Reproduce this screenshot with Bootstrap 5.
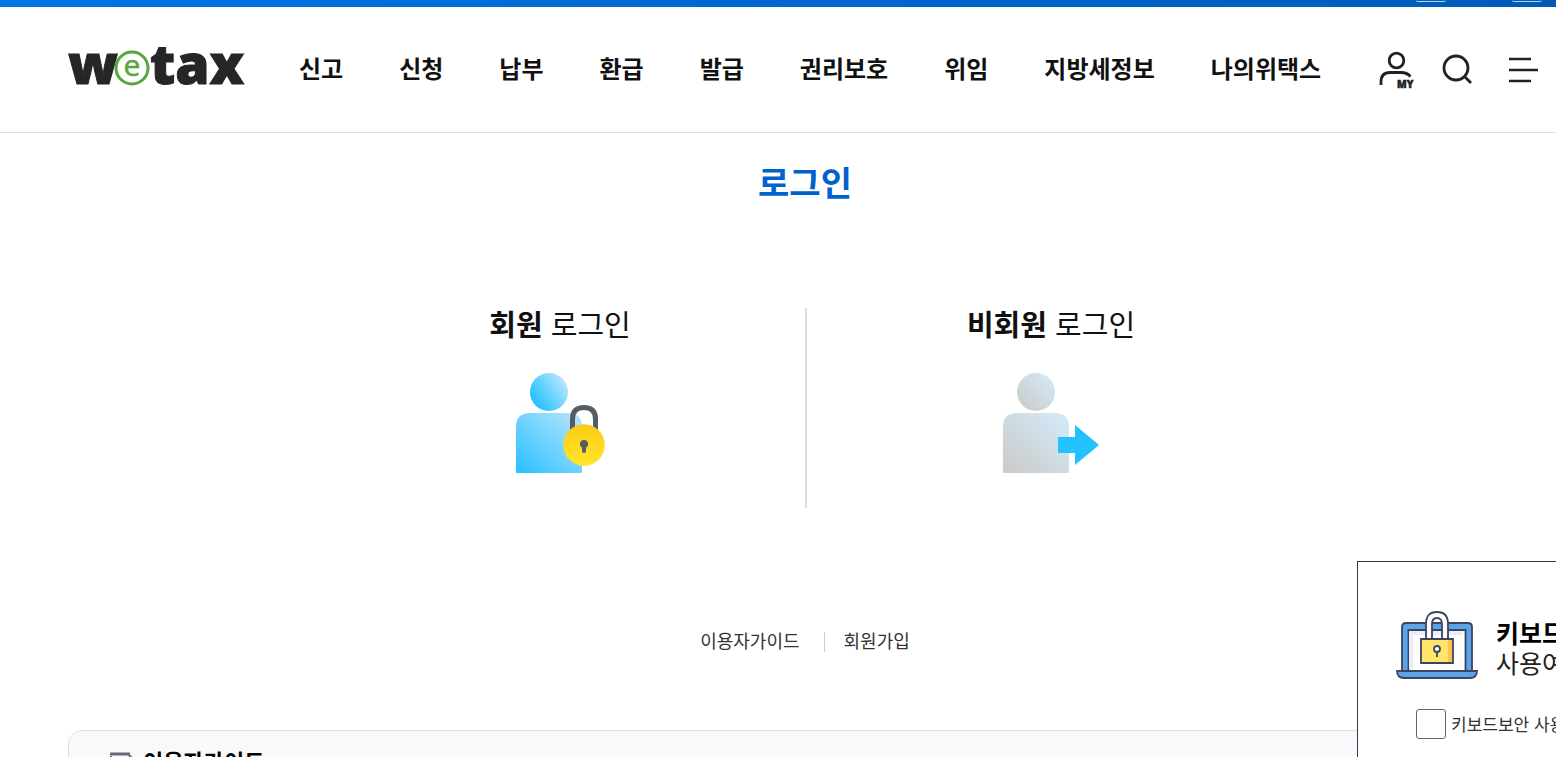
<!DOCTYPE html>
<html lang="ko">
<head>
<meta charset="utf-8">
<meta name="viewport" content="width=device-width, initial-scale=1">
<title>로그인 | wetax</title>
<link href="https://cdn.jsdelivr.net/npm/bootstrap@5.3.0/dist/css/bootstrap.min.css" rel="stylesheet">
<style>
body{font-family:"Noto Sans CJK KR",sans-serif;color:#111;background:#fff}
a{color:inherit;text-decoration:none}
.page{height:100vh}
.wrap{padding-left:68px;padding-right:14px}
.topbar{height:7px;background:linear-gradient(90deg,#0075e6,#005bb8)}
.topbar .wrap{gap:66px}
.chip{width:30px;height:2px;border-bottom:1px solid #b5d2f0;border-radius:0 0 6px 6px}
.site-head{height:126px;border-bottom:1px solid #ddd}
.logo{width:176px;height:56px}
.menu{gap:56px;margin-left:55px;padding-bottom:3px;font-size:24px;line-height:36px;font-weight:700;white-space:nowrap}
.tools{gap:20px}
.tool{height:44px}
.page-title{font-size:34px;line-height:50px;font-weight:700;color:#0062cc;padding-top:24px;margin-bottom:101px}
.choices{width:980px;max-width:100%}
.choice{height:200px}
.choice + .choice{border-left:2px solid #ddd}
.choice h2{font-size:29px;line-height:30px;margin-bottom:34px;font-weight:400}
.links{font-size:18px;line-height:20px;color:#333;margin-top:124px;margin-bottom:78px}
.links a{height:20px;line-height:16px}
.links a + a{border-left:1px solid #ccc;padding-left:19px;margin-left:24px}
.guide{height:200px;background:#f8f9fb;border:1px solid #ddd;border-radius:14px;padding:11px 40px}
.guide h3{font-size:22px;line-height:36px;font-weight:700;color:#000}
.security{right:0;top:561px;bottom:0;width:199px;border:1px solid #333a4a;border-right:0;border-bottom:0;padding:48px 0 0 38px;white-space:nowrap}
.security .headline{font-size:25px;line-height:30px;gap:18px;color:#222}
.security .words{padding-top:4px}
.security strong{color:#000}
.security .form-check-input{width:30px;height:30px;border:1px solid #666;border-radius:3px;margin:0}
.security .opt{font-size:17px;line-height:26px;margin:29px 0 0 20px;gap:5px;color:#333}
</style>
</head>
<body>
<div class="page position-relative overflow-hidden">
  <div class="topbar"><div class="wrap d-flex justify-content-end"><span class="chip"></span><span class="chip"></span></div></div>
  <header class="site-head wrap d-flex align-items-center">
    <a href="#" aria-label="wetax">
      <svg class="logo d-block overflow-visible" viewBox="0 0 176 56" fill="#262626" stroke="#262626" font-family="Open Sans, sans-serif" font-weight="800">
        <text x="0" y="42" font-size="55" stroke-width="1">w</text>
        <text x="82" y="42" font-size="55" stroke-width="1">tax</text>
        <circle cx="64" cy="26" r="16" fill="#fff" stroke="#57a83a" stroke-width="3"/>
        <text x="64" y="34" font-size="30" font-weight="400" fill="#57a83a" stroke="#57a83a" stroke-width="0.500" text-anchor="middle">e</text>
      </svg>
    </a>
    <nav class="menu d-flex" aria-label="주 메뉴">
      <a href="#">신고</a><a href="#">신청</a><a href="#">납부</a><a href="#">환급</a><a href="#">발급</a><a href="#">권리보호</a><a href="#">위임</a><a href="#">지방세정보</a><a href="#">나의위택스</a>
    </nav>
    <div class="tools d-flex ms-auto">
      <button class="tool btn p-0 border-0" aria-label="MY"><svg class="d-block" width="40" height="44" viewBox="0 0 40 44" fill="none" stroke="#222" stroke-width="2.800"><circle cx="20.500" cy="12.500" r="7.300"/><path d="M5 37v-3q0-9.500 9-9.500h11q6 0 9.500 4"/><text x="21" y="40" font-family="Open Sans, sans-serif" font-size="10" font-weight="800" fill="#222" stroke-width="0.500">MY</text></svg></button>
      <button class="tool btn p-0 border-0" aria-label="검색"><svg class="d-block" width="40" height="44" viewBox="0 0 40 44" fill="none" stroke="#222" stroke-width="2.800"><circle cx="20" cy="20" r="12"/><path d="m28 28 7 7"/></svg></button>
      <button class="tool btn p-0 border-0" aria-label="전체 메뉴"><svg class="d-block" width="46" height="44" viewBox="0 0 46 44" stroke="#222" stroke-width="2.600"><path d="M13 11h22M13 22h29M13 33h22"/></svg></button>
    </div>
  </header>
  <main class="wrap">
    <h1 class="page-title text-center">로그인</h1>
    <div class="choices row g-0 mx-auto text-center">
      <a href="#" class="choice col-6">
        <h2><strong>회원</strong> 로그인</h2>
        <svg class="d-block mx-auto" width="90" height="102" viewBox="0 0 90 102">
          <defs>
            <linearGradient id="blue" x1="0" y1="1" x2="1" y2="0"><stop offset="0" stop-color="#27c0ff"/><stop offset="1" stop-color="#bbe6ff"/></linearGradient>
            <linearGradient id="blueHead" x1="0.100" y1="0.800" x2="0.950" y2="0.200"><stop offset="0" stop-color="#20bfff"/><stop offset="1" stop-color="#bde7ff"/></linearGradient>
            <linearGradient id="gold" x1="0" y1="0" x2="0" y2="1"><stop offset="0" stop-color="#fccb16"/><stop offset="1" stop-color="#ffe62a"/></linearGradient>
          </defs>
          <circle cx="34" cy="20" r="19" fill="url(#blueHead)"/>
          <path d="M1 100V55q0-14 14-14h38q14 0 14 14v45q0 1-1 1H2q-1 0-1-1z" fill="url(#blue)"/>
          <path d="M57.500 58V47q0-11.500 11.500-11.500T80.500 47v11" fill="none" stroke="#555c63" stroke-width="5"/>
          <circle cx="69" cy="73" r="20.800" fill="url(#gold)"/>
          <circle cx="69" cy="72" r="4" fill="#555c63"/><path d="M69 72v7" stroke="#555c63" stroke-width="4" stroke-linecap="round"/>
        </svg>
      </a>
      <a href="#" class="choice col-6">
        <h2><strong>비회원</strong> 로그인</h2>
        <svg class="d-block mx-auto" width="98" height="102" viewBox="0 0 98 102">
          <defs>
            <linearGradient id="grey" x1="0" y1="1" x2="1" y2="0"><stop offset="0.100" stop-color="#ccc"/><stop offset="1" stop-color="#d3ecfb"/></linearGradient>
          </defs>
          <circle cx="34" cy="20" r="19" fill="url(#grey)"/>
          <path d="M1 100V55q0-14 14-14h38q14 0 14 14v45q0 1-1 1H2q-1 0-1-1z" fill="url(#grey)"/>
          <path d="M56 65h17V53l24 20-24 20V81H56z" fill="#24c1ff"/>
        </svg>
      </a>
    </div>
    <div class="links d-flex justify-content-center"><a href="#">이용자가이드</a><a href="#">회원가입</a></div>
    <section class="guide">
      <h3 class="d-flex align-items-center gap-2 mb-0">
        <svg width="26" height="28" viewBox="0 0 26 28" fill="none" stroke="#6b6b78" stroke-width="3"><path d="M1 8h20"/><path d="m19 8 5 5v13H2V10" stroke-width="2"/></svg>
        이용자가이드
      </h3>
    </section>
  </main>
  <aside class="security position-absolute bg-white overflow-hidden">
    <div class="headline d-flex align-items-center">
      <svg class="flex-shrink-0" width="82" height="70" viewBox="0 0 82 70" stroke="#3a4660" stroke-width="1.800">
        <path d="M6 61V17q0-4 4-4h62q4 0 4 4v44z" fill="#5ba4e8"/>
        <path d="M12.500 61V20h57v41z" fill="#fff"/><path d="M15 59V23h52" fill="none" stroke="#ececfa" stroke-width="4"/>
        <path d="M1 61h80q0 7-7 7H8q-7 0-7-7z" fill="#5ba4e8"/>
        <path d="M30 29V14q0-12 11-12t11 12v15h-6V14q0-6-5-6t-5 6v15z" fill="#fff"/>
        <path d="M25 29h32v24H25z" fill="#ffe56a"/><path d="M52 30h4v22h-4z" fill="#ffc251" stroke="none"/>
        <circle cx="41" cy="39" r="3" fill="#fff"/><path d="M41 42v5"/>
      </svg>
      <div class="words"><strong>키보드보안</strong><br>사용여부 선택</div>
    </div>
    <div class="opt d-flex align-items-center"><input class="form-check-input flex-shrink-0" type="checkbox" id="kbd"><label for="kbd">키보드보안 사용</label></div>
  </aside>
</div>
<script src="https://cdn.jsdelivr.net/npm/bootstrap@5.3.0/dist/js/bootstrap.bundle.min.js"></script>
</body>
</html>
